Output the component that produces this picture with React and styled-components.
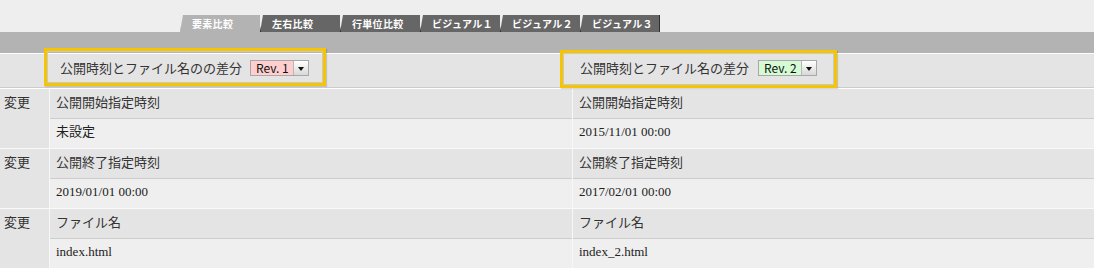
import styled, { createGlobalStyle } from "styled-components";

const GlobalStyle = createGlobalStyle`
  html, body {
    margin: 0;
    padding: 0;
    background: #eeeeee;
  }
  body {
    font-family: "Noto Sans CJK JP", "DejaVu Sans", sans-serif;
    color: #333;
  }
`;

const sans = `"Noto Sans CJK JP", "DejaVu Sans", sans-serif`;
const serif = `"Liberation Serif", "Noto Sans CJK JP", serif`;

const Page = styled.div`
  width: 1094px;
  height: 268px;
  overflow: hidden;
  background: #eeeeee;
`;

const TabBar = styled.nav`
  display: flex;
  align-items: flex-end;
  height: 32px;
  padding-left: 180px;
  box-sizing: border-box;
`;

const Tab = styled.div`
  width: 80px;
  height: 17px;
  box-sizing: border-box;
  padding-left: ${(p) => (p.$active ? 11 : 11)}px;
  background: ${(p) => (p.$active ? "#b3b3b3" : "#666666")};
  border-left: 1px solid ${(p) => (p.$active ? "#b3b3b3" : "#2e2e2e")};
  clip-path: polygon(3px 0, 100% 0, 100% 100%, 0 100%);
  color: #fff;
  font-family: ${sans};
  font-size: 10px;
  font-weight: 700;
  line-height: 17px;
  letter-spacing: 0.3px;
  white-space: nowrap;
  &:last-child {
    border-right: 1px solid #2e2e2e;
  }
`;

const Band = styled.div`
  height: 21px;
  background: #b3b3b3;
  border-bottom: 1px solid #ffffff;
`;

const Grid = styled.div`
  display: grid;
  grid-template-columns: 49px 522px 523px;
  column-gap: 1px;
  background: #f7f7f7;
`;

const HeaderRow = styled(Grid)`
  background: #e4e4e4;
  border-bottom: 1px solid #cdcdcd;
  box-shadow: 0 1px 0 #ffffff;
  margin-bottom: 1px;
`;

const HeaderCell = styled.div`
  position: relative;
  display: flex;
  align-items: center;
  gap: 8px;
  height: 33px;
  padding: 0 0 5px ${(p) => p.$pad}px;
  box-sizing: border-box;
  font-family: ${sans};
  font-size: 13px;
  line-height: 18px;
  color: #333;
`;

const Highlight = styled.div`
  position: absolute;
  left: ${(p) => p.$left}px;
  top: ${(p) => p.$top}px;
  width: ${(p) => p.$width}px;
  height: 38px;
  box-sizing: border-box;
  border: 3px solid #f7c500;
  box-shadow: inset 0 0 0 1px #c9c9c9, 1px 1px 1px rgba(0, 0, 0, 0.15);
  pointer-events: none;
`;

const RevSelect = styled.div`
  display: flex;
  height: 16px;
  border: 1px solid #a8a8a8;
  box-sizing: border-box;
  margin-left: ${(p) => p.$gap || 0}px;
`;

const RevLabel = styled.span`
  display: block;
  padding: 0 4px 0 5px;
  background: ${(p) => p.$bg};
  font-family: ${sans};
  font-size: 12px;
  line-height: 14px;
  color: #111;
`;

const RevArrow = styled.span`
  display: flex;
  align-items: center;
  justify-content: center;
  width: 14px;
  background: linear-gradient(#ffffff, #d8d8d8);
  border-left: 1px solid #b8b8b8;
  &::after {
    content: "";
    border-left: 3px solid transparent;
    border-right: 3px solid transparent;
    border-top: 4px solid #111;
    margin-top: 1px;
  }
`;

const Group = styled(Grid)`
  grid-template-rows: 30px 29px;
  border-bottom: 1px solid #fafafa;
`;

const KindCell = styled.div`
  grid-row: 1 / span 2;
  background: #e4e4e4;
  padding: 4px 0 0 4px;
  font-family: ${sans};
  font-size: 13px;
  line-height: 18px;
  color: #333;
`;

const LabelCell = styled.div`
  background: #e4e4e4;
  border-bottom: 1px solid #cdcdcd;
  padding: 4px 0 0 6px;
  font-family: ${sans};
  font-size: 13px;
  line-height: 18px;
  color: #333;
`;

const ValueCell = styled.div`
  background: #efefef;
  padding: 4px 0 0 6px;
  font-family: ${serif};
  font-size: 13px;
  line-height: 17px;
  color: #222;
`;

const tabs = ["要素比較", "左右比較", "行単位比較", "ビジュアル１", "ビジュアル２", "ビジュアル３"];

const rows = [
  { label: "公開開始指定時刻", left: "未設定", right: "2015/11/01 00:00" },
  { label: "公開終了指定時刻", left: "2019/01/01 00:00", right: "2017/02/01 00:00" },
  { label: "ファイル名", left: "index.html", right: "index_2.html" },
];

export default function App() {
  return (
    <Page>
      <GlobalStyle />
      <TabBar>
        {tabs.map((t, i) => (
          <Tab key={t} $active={i === 0}>
            {t}
          </Tab>
        ))}
      </TabBar>
      <Band />
      <HeaderRow>
        <div />
        <HeaderCell $pad={10}>
          公開時刻とファイル名のの差分
          <RevSelect>
            <RevLabel $bg="#ffcfcf">Rev. 1</RevLabel>
            <RevArrow />
          </RevSelect>
          <Highlight $left={-6} $top={-6} $width={282} />
        </HeaderCell>
        <HeaderCell $pad={7}>
          公開時刻とファイル名の差分
          <RevSelect $gap={1}>
            <RevLabel $bg="#d4fbd4">Rev. 2</RevLabel>
            <RevArrow />
          </RevSelect>
          <Highlight $left={-13} $top={-4} $width={277} />
        </HeaderCell>
      </HeaderRow>
      {rows.map((r) => (
        <Group key={r.label}>
          <KindCell>変更</KindCell>
          <LabelCell>{r.label}</LabelCell>
          <LabelCell>{r.label}</LabelCell>
          <ValueCell>{r.left}</ValueCell>
          <ValueCell>{r.right}</ValueCell>
        </Group>
      ))}
    </Page>
  );
}
